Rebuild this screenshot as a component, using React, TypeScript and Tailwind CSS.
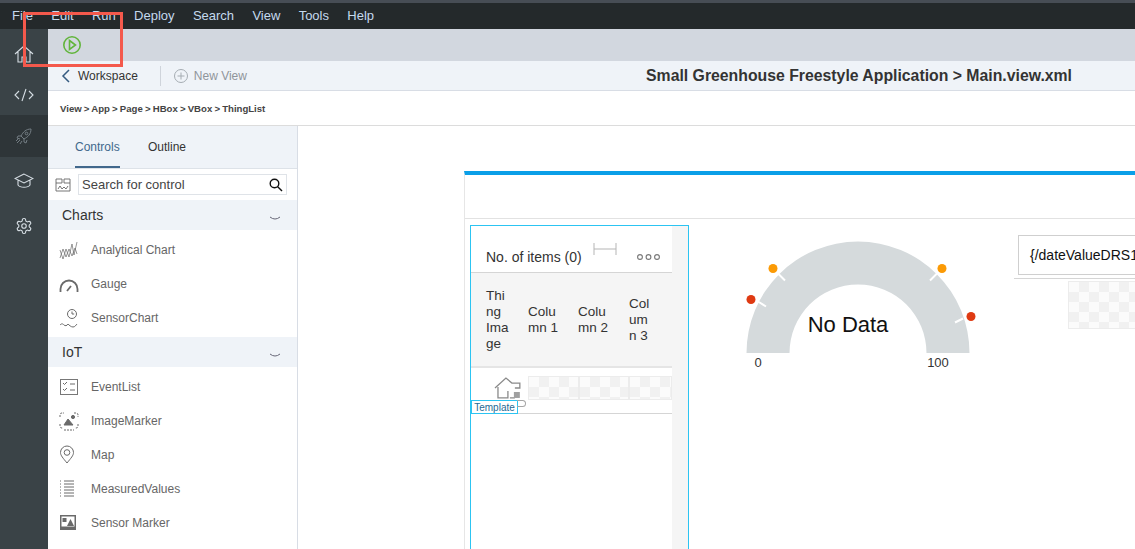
import React from 'react';

const menu = ['File', 'Edit', 'Run', 'Deploy', 'Search', 'View', 'Tools', 'Help'];

function Checker({ className }: { className: string }) {
  return (
    <div className={`bg-[conic-gradient(#f1f1f1_25%,#fbfbfb_0_50%,#f1f1f1_0_75%,#fbfbfb_0)] bg-[length:20px_20px] border border-[#ececec] ${className}`} />
  );
}

const Stroke = ({ children, size = 20, color = '#6a6a6a' }: { children: React.ReactNode; size?: number; color?: string }) => (
  <svg width={size} height={size} viewBox="0 0 20 20" fill="none" stroke={color} strokeWidth="1">
    {children}
  </svg>
);

const icons: Record<string, React.ReactNode> = {
  chart: <path d="M1 10l3 9 3-10 3 8 3-13 2 11 3-13M1 18l3-9 3 8 3-8 3 7 3-8 2 6" strokeWidth="0.7" />,
  gauge: (
    <>
      <path d="M1.500 18v-3a8.500 8.500 0 0 1 17 0v3" strokeWidth="1.800" />
      <path d="M8 17l4-5" strokeWidth="1.800" />
    </>
  ),
  sensor: (
    <>
      <circle cx="13" cy="6" r="4.500" />
      <path d="M13 3.500V6h2.200M1 17c2-2 3-1 4 0s3 1 4-1c1 1 3 3 5 3s3-2 4-3" />
    </>
  ),
  event: (
    <>
      <rect x="1.500" y="2.500" width="17" height="15" stroke="#777" />
      <path d="M4 6l1.500 1.500L8 5M4 12l1.500 1.500L8 11M11 7h5M11 13h5" />
    </>
  ),
  image: (
    <>
      <path d="M1 6V4q0-2 2-2h2M15 2h2q2 0 2 2v2M1 13v2q0 2 2 2h1M19 13v2q0 2-2 2h-1M5 19h10" strokeDasharray="2 1" />
      <path d="M5 14l4-6 5 6z" fill="#6a6a6a" />
      <circle cx="14" cy="6" r="1.600" fill="#6a6a6a" />
    </>
  ),
  map: (
    <>
      <path d="M8 18C4 13 1.500 10.500 1.500 7.500a6.500 6.500 0 0 1 13 0C14.500 10.500 12 13 8 18z" />
      <circle cx="8" cy="7.500" r="2.800" />
    </>
  ),
  measured: <path d="M1 2h1M5 2h10M1 5h1M5 5h10M1 8h1M5 8h10M1 11h1M5 11h10M1 14h1M5 14h10M1 17h1M5 17h10" />,
  marker: (
    <>
      <rect x="1" y="2" width="16" height="15" fill="#6a6a6a" stroke="none" />
      <rect x="2.500" y="3.500" width="13" height="10" fill="#fff" stroke="none" />
      <rect x="3.500" y="5" width="4" height="4" fill="#6a6a6a" stroke="none" />
      <path d="M8 13l3.500-7 3.500 7z" fill="#6a6a6a" stroke="none" />
    </>
  ),
};

function Group({ title, items }: { title: string; items: [string, string][] }) {
  return (
    <>
      <div className="h-[30px] flex items-center justify-between pl-[14px] pr-[16px] bg-[#eff3f8] text-[14px] text-[#333]">
        <span>{title}</span>
        <svg width="12" height="6" viewBox="0 0 12 6" fill="none" stroke="#667" strokeWidth="1" className="mt-[8px]">
          <path d="M1 1q5 4 10 0" />
        </svg>
      </div>
      <div className="bg-white pt-[3px] pb-[2px]">
        {items.map(([icon, label]) => (
          <div key={label} className="h-[34px] flex items-center pl-[11px] text-[12px] text-[#666]">
            <div className="w-[32px] shrink-0"><Stroke>{icons[icon]}</Stroke></div>
            <span>{label}</span>
          </div>
        ))}
      </div>
    </>
  );
}

function Gauge() {
  const cy = 112;
  return (
    <svg width="232" height="135" viewBox="0 0 232 135" className="shrink-0">
      <path d="M0.500 112a111.500 111.500 0 0 1 223 0h-43a68.500 68.500 0 0 0-137 0z" fill="#d5dadc" />
      <path d="M12 60.500l8 5M31 31.500l8 8M191 32.500l-7 7M217 77.500l-8 4" stroke="#fff" strokeWidth="2" />
      <circle cx="5" cy="58.500" r="4.500" fill="#df3a12" />
      <circle cx="27" cy="27.500" r="4.500" fill="#fb9a05" />
      <circle cx="196" cy="27.500" r="4.500" fill="#fb9a05" />
      <circle cx="225" cy="75.500" r="4.500" fill="#df3a12" />
      <text x="102" y={cy - 21} textAnchor="middle" fontSize="22" fill="#111" fontFamily="Liberation Sans">No Data</text>
      <text x="12" y={cy + 14} textAnchor="middle" fontSize="13" fill="#333" fontFamily="Liberation Sans">0</text>
      <text x="192" y={cy + 14} textAnchor="middle" fontSize="13" fill="#333" fontFamily="Liberation Sans">100</text>
    </svg>
  );
}

export default function App() {
  return (
    <div className="relative w-[1135px] h-[549px] overflow-hidden bg-white font-['Liberation_Sans',sans-serif]">
      {/* menu bar */}
      <div className="h-[29px] bg-[#24292b] border-t-[3px] border-[#474d55] flex items-center pl-[12px] gap-[18.300px] text-[13px] text-[#c4d9ee]">
        {menu.map((m) => (
          <span key={m}>{m}</span>
        ))}
      </div>

      <div className="flex h-[520px]">
        {/* icon rail */}
        <div className="w-[48px] shrink-0 bg-[#3a4347] flex flex-col">
          <div className="h-[44px] flex items-center justify-center pt-[6px]">
            <svg width="20" height="20" viewBox="0 0 20 20" fill="none" stroke="#d5dde3" strokeWidth="1.100">
              <path d="M1 10l9-8 9 8M4 8v10h4v-5h4v5h4V8" />
            </svg>
          </div>
          <div className="h-[42px] flex items-center justify-center pt-[2px]">
            <svg width="20" height="14" viewBox="0 0 20 14" fill="none" stroke="#d5dde3" strokeWidth="1.100">
              <path d="M5 3L1 7l4 4M15 3l4 4-4 4M12 1L8 13" />
            </svg>
          </div>
          <div className="h-[42px] flex items-center justify-center bg-[#2e3538]">
            <svg width="18" height="18" viewBox="0 0 18 18" fill="none" stroke="#747e84" strokeWidth="1">
              <path d="M16 2c-5 0-8 3-10 7l3 3c4-2 7-5 7-10zM6 9H3l-1 2 3 1M9 12v3l2 1 1-3M5 13l-3 3M7 14l-2 3M4 11l-3 3" />
              <circle cx="11.500" cy="6.500" r="1.300" />
            </svg>
          </div>
          <div className="h-[46px] flex items-center justify-center pt-[2px]">
            <svg width="20" height="16" viewBox="0 0 20 16" fill="none" stroke="#d5dde3" strokeWidth="1.100">
              <path d="M10 1L1 5.500 10 10l9-4.500zM4 7.500V12c2 3 10 3 12 0V7.500" />
            </svg>
          </div>
          <div className="h-[44px] flex items-center justify-center pt-[2px]">
            <svg width="18" height="18" viewBox="0 0 24 24" fill="none" stroke="#d5dde3" strokeWidth="1.500">
              <path d="M12.220 2h-.44a2 2 0 0 0-2 2v.18a2 2 0 0 1-1 1.730l-.43.250a2 2 0 0 1-2 0l-.15-.080a2 2 0 0 0-2.730.730l-.22.380a2 2 0 0 0 .730 2.730l.15.100a2 2 0 0 1 1 1.720v.510a2 2 0 0 1-1 1.740l-.15.090a2 2 0 0 0-.730 2.730l.22.380a2 2 0 0 0 2.730.730l.15-.080a2 2 0 0 1 2 0l.43.250a2 2 0 0 1 1 1.730V20a2 2 0 0 0 2 2h.44a2 2 0 0 0 2-2v-.18a2 2 0 0 1 1-1.730l.43-.250a2 2 0 0 1 2 0l.15.080a2 2 0 0 0 2.730-.730l.22-.390a2 2 0 0 0-.730-2.730l-.15-.080a2 2 0 0 1-1-1.740v-.5a2 2 0 0 1 1-1.740l.15-.090a2 2 0 0 0 .730-2.730l-.22-.380a2 2 0 0 0-2.730-.730l-.15.080a2 2 0 0 1-2 0l-.43-.250a2 2 0 0 1-1-1.730V4a2 2 0 0 0-2-2z" />
              <circle cx="12" cy="12" r="3" />
            </svg>
          </div>
        </div>

        <div className="flex-1 min-w-0 flex flex-col">
          {/* run toolbar */}
          <div className="h-[32px] shrink-0 bg-[#d2d7df] flex items-center pl-[14px]">
            <svg width="20" height="20" viewBox="0 0 20 20" fill="none" stroke="#62b53c" strokeWidth="1.600" className="mt-[-1px]">
              <circle cx="10" cy="10" r="8.200" />
              <path d="M7.500 5.500l6 4.500-6 4.500z" />
            </svg>
          </div>

          {/* workspace row */}
          <div className="h-[30px] shrink-0 bg-[#eff3f8] border-b border-[#d8dde5] flex items-center relative">
            <svg width="10" height="14" viewBox="0 0 10 14" fill="none" stroke="#345a80" strokeWidth="1.500" className="ml-[13px]">
              <path d="M8 1L2 7l6 6" />
            </svg>
            <span className="ml-[7px] text-[12px] text-[#333]">Workspace</span>
            <div className="ml-[22px] w-px h-[20px] bg-[#cfd4db]" />
            <svg width="14" height="14" viewBox="0 0 14 14" fill="none" stroke="#a5acb2" strokeWidth="1" className="ml-[13px]">
              <circle cx="7" cy="7" r="6.500" />
              <path d="M7 3.500v7M3.500 7h7" />
            </svg>
            <span className="ml-[6px] text-[12px] text-[#8f959b]">New View</span>
            <span className="ml-auto mr-[63px] text-[15.800px] font-bold text-[#333]">Small Greenhouse Freestyle Application &gt; Main.view.xml</span>
          </div>

          {/* breadcrumb */}
          <div className="h-[35px] shrink-0 border-b border-[#dcdcdc] flex items-center pl-[12px] pt-[2px] text-[9.600px] font-bold text-[#444] [word-spacing:-0.500px]">
            View &gt; App &gt; Page &gt; HBox &gt; VBox &gt; ThingList
          </div>

          <div className="flex-1 min-h-0 flex">
            {/* controls panel */}
            <div className="w-[250px] shrink-0 bg-[#eff3f8] border-r border-[#d8dde5] overflow-hidden">
              <div className="h-[42px] flex items-start pl-[27px] gap-[28px] text-[12px] text-[#333]">
                <div className="h-[42px] leading-[42px] text-[#41688c] border-b-2 border-[#41688c] w-[45px]">Controls</div>
                <div className="leading-[42px]">Outline</div>
              </div>
              <div className="h-[32px] bg-white flex items-center pl-[7px] pr-[10px] border-t border-[#dde2e8]">
                <svg width="16" height="14" viewBox="0 0 16 14" fill="none" stroke="#666" strokeWidth="0.900">
                  <path d="M1 1h6v4H1zM9 1h6v4H9zM1 5v8h14V5M3 11l2-3 2 3 2-2 2 2 2-3" />
                </svg>
                <div className="ml-[7px] flex-1 h-[21px] bg-white border border-[#dfe3e8] flex items-center justify-between pl-[3px] pr-[3px] text-[13px] text-[#444]">
                  <span>Search for control</span>
                  <svg width="14" height="14" viewBox="0 0 14 14" fill="none" stroke="#111" strokeWidth="1.400">
                    <circle cx="5.500" cy="5.500" r="4.300" />
                    <path d="M8.700 8.700L13 13" />
                  </svg>
                </div>
              </div>
              <Group title="Charts" items={[['chart', 'Analytical Chart'], ['gauge', 'Gauge'], ['sensor', 'SensorChart']]} />
              <Group
                title="IoT"
                items={[['event', 'EventList'], ['image', 'ImageMarker'], ['map', 'Map'], ['measured', 'MeasuredValues'], ['marker', 'Sensor Marker']]}
              />
              <div className="h-[20px] bg-white" />
            </div>

            {/* canvas */}
            <div className="flex-1 min-w-0 overflow-hidden pl-[166px] pt-[45px]">
              <div className="w-[800px] h-[400px] border-t-4 border-l border-[#e6e6e6] border-t-[#0a9fe8]">
                <div className="h-[44px] border-b border-[#e2e2e2]" />
                <div className="flex pl-[5px] pt-[6px]">
                  {/* thing list */}
                  <div className="w-[219px] h-[330px] shrink-0 border border-[#2cc4f2] flex bg-white">
                    <div className="w-[201px] shrink-0">
                      <div className="h-[47px] border-b border-[#d5d5d5] flex relative">
                        <span className="ml-[15px] mt-[23px] text-[14px] leading-[16px] text-[#333]">No. of items (0)</span>
                        <svg width="24" height="12" viewBox="0 0 24 12" fill="none" stroke="#b5b5b5" strokeWidth="1" className="ml-[11px] mt-[17px]">
                          <path d="M1 0v12M23 0v12M1 6h22" />
                        </svg>
                        <svg width="24" height="8" viewBox="0 0 24 8" fill="none" stroke="#777" strokeWidth="1.100" className="ml-[20px] mt-[27px]">
                          <circle cx="3" cy="4" r="2.400" />
                          <circle cx="11.500" cy="4" r="2.400" />
                          <circle cx="20" cy="4" r="2.400" />
                        </svg>
                      </div>
                      <div className="h-[95px] bg-[#f5f5f5] border-b-2 border-[#e5e5e5] flex items-center text-[13.500px] leading-[16px] text-[#333] pl-[15px]">
                        <div className="w-[42px]">Thi<br />ng<br />Ima<br />ge</div>
                        <div className="w-[50px]">Colu<br />mn 1</div>
                        <div className="w-[51px]">Colu<br />mn 2</div>
                        <div>Col<br />um<br />n 3</div>
                      </div>
                      <div className="h-[46px] relative border-b border-[#d5d5d5]">
                        <div className="flex pt-[8px]">
                          <svg width="30" height="26" viewBox="0 0 30 26" fill="none" stroke="#8a8a8a" strokeWidth="1.300" className="ml-[22px]">
                            <path d="M2 12L13 2l6 5h8v5h-5M5 11v11h10V15M22 22H17" />
                            <rect x="21" y="16" width="6" height="6" fill="#a0a0a0" stroke="none" />
                          </svg>
                          <Checker className="ml-[5px] w-[51px] h-[24px]" />
                          <Checker className="w-[51px] h-[24px]" />
                          <Checker className="w-[43px] h-[24px]" />
                        </div>
                        <div className="absolute left-0 top-[32px] w-[47px] h-[14px] border border-[#2cc4f2] bg-white text-[10px] leading-[14px] text-center text-[#1f6a94]">Template</div>
                        <div className="absolute left-[46px] top-[32px] w-[9px] h-[7px] border border-l-0 border-[#a5a5a5] rounded-r-[4px]" />
                      </div>
                    </div>
                    <div className="flex-1 bg-[#f5f5f5]" />
                  </div>

                  <div className="ml-[57px] pt-[16px]">
                    <Gauge />
                  </div>

                  <div className="ml-[36px] w-[240px] pt-[10px]">
                    <div className="ml-[4px] h-[40px] border border-[#cfcfcf] flex items-center pl-[11px] text-[14px] text-[#111]">{'{/dateValueDRS1'}</div>
                    <div className="mt-[3px] border-t border-[#d5d5d5]" />
                    <Checker className="mt-[2px] ml-[54px] w-[200px] h-[48px]" />
                  </div>
                </div>
              </div>
            </div>
          </div>
        </div>
      </div>

      {/* annotation drawn over the screenshot */}
      <div className="absolute left-[23px] top-[12px] w-[100px] h-[55px] border-[3px] border-[#f4594c]" />
    </div>
  );
}
